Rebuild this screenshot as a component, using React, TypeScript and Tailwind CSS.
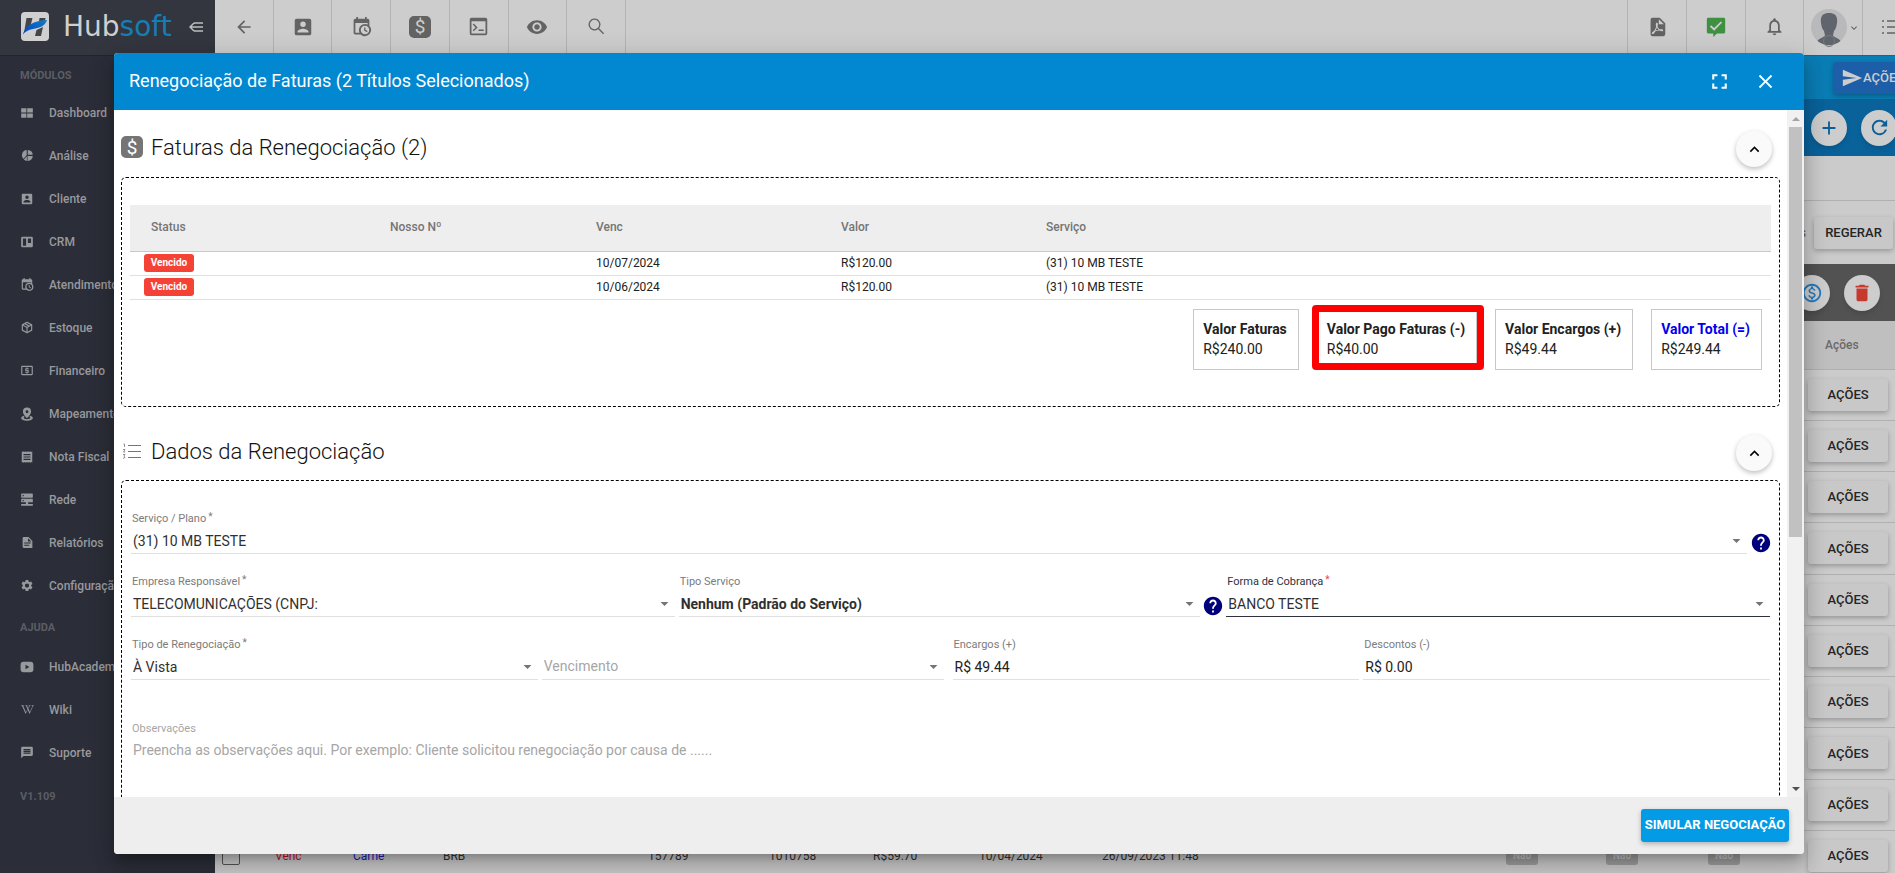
import React, { useId } from "react";
import {
  MdAdd,
  MdArrowBack,
  MdArrowDropDown,
  MdClose,
  MdDelete,
  MdFullscreen,
  MdHelp,
  MdKeyboardArrowDown,
  MdKeyboardArrowUp,
  MdLocalAtm,
  MdMessage,
  MdNotificationsNone,
  MdOutlineMonetizationOn,
  MdReceipt,
  MdRefresh,
  MdSend,
  MdSettings,
  MdVisibility,
} from "react-icons/md";
import { FaWikipediaW } from "react-icons/fa";

function Glyph({ d, size }: { d: string; size: number }) {
  return (
    <svg width={size} height={size} viewBox="0 0 24 24" fill="currentColor" fillRule="evenodd" aria-hidden="true">
      <path d={d} />
    </svg>
  );
}

const shapes = {
  accountBox:
    "M6,17C6,15 10,13.9 12,13.9C14,13.9 18,15 18,17V18H6M15,9A3,3 0 0,1 12,12A3,3 0 0,1 9,9A3,3 0 0,1 12,6A3,3 0 0,1 15,9M3,5V19A2,2 0 0,0 5,21H19A2,2 0 0,0 21,19V5A2,2 0 0,0 19,3H5C3.89,3 3,3.9 3,5Z",
  calendarClock:
    "M15,13H16.5V15.82L18.94,17.23L18.19,18.53L15,16.69V13M19,8H5V19H9.67C9.24,18.09 9,17.07 9,16A7,7 0 0,1 16,9C17.07,9 18.09,9.24 19,9.67V8M5,21C3.89,21 3,20.1 3,19V5C3,3.89 3.89,3 5,3H6V1H8V3H16V1H18V3H19A2,2 0 0,1 21,5V11.1C22.24,12.36 23,14.09 23,16A7,7 0 0,1 16,23C14.09,23 12.36,22.24 11.1,21H5M16,11.15A4.85,4.85 0 0,0 11.15,16C11.15,18.68 13.32,20.85 16,20.85A4.85,4.85 0 0,0 20.85,16C20.85,13.32 18.68,11.15 16,11.15Z",
  filePdf:
    "M14,9H19.5L14,3.5V9M7,2H15L21,8V20A2,2 0 0,1 19,22H7C5.89,22 5,21.1 5,20V4A2,2 0 0,1 7,2M11.93,12.44C12.34,13.34 12.86,14.08 13.46,14.59L13.87,14.91C13,15.07 11.8,15.35 10.53,15.84V15.84L10.42,15.88L10.92,14.84C11.37,13.97 11.7,13.18 11.93,12.44M18.41,16.25C18.59,16.07 18.68,15.84 18.69,15.59C18.72,15.39 18.67,15.2 18.57,15.04C18.28,14.57 17.53,14.35 16.29,14.35L15,14.42L14.13,13.84C13.5,13.32 12.93,12.41 12.53,11.28L12.57,11.14C12.9,9.81 13.21,8.2 12.55,7.54C12.39,7.38 12.17,7.3 11.94,7.3H11.7C11.33,7.3 11,7.69 10.91,8.07C10.54,9.4 10.76,10.13 11.13,11.34V11.35C10.88,12.23 10.56,13.25 10.05,14.28L9.09,16.08L8.2,16.57C7,17.32 6.43,18.16 6.32,18.69C6.28,18.88 6.3,19.05 6.37,19.23L6.4,19.28L6.88,19.59L7.32,19.7C8.13,19.7 9.05,18.75 10.29,16.63L10.47,16.56C11.5,16.23 12.78,16 14.5,15.81C15.53,16.32 16.74,16.55 17.5,16.55C17.94,16.55 18.24,16.44 18.41,16.25Z",
  consoleWindow: "M4,2H20A2,2 0 0,1 22,4V20A2,2 0 0,1 20,22H4A2,2 0 0,1 2,20V4A2,2 0 0,1 4,2M4,6V20H20V6ZM6.6,8.6L11,13L6.6,17.4L5.4,16.2L8.6,13L5.4,9.8ZM12,15.5H18V17.2H12Z",
  magnifier: "M9.5,2A7.5,7.5 0 0,1 15.4,14.1L21.6,20.6L20.4,21.8L14.1,15.4A7.5,7.5 0 1,1 9.5,2M9.5,3.6A5.9,5.9 0 1,0 9.5,15.4A5.9,5.9 0 1,0 9.5,3.6",
  messageCheck: "M3.5,2H20.5A1.5,1.5 0 0,1 22,3.5V17.5A1.5,1.5 0 0,1 20.5,19H13L9,23V19H3.5A1.5,1.5 0 0,1 2,17.5V3.5A1.5,1.5 0 0,1 3.5,2M6.6,10.2L5.3,11.6L10,16L18.7,7.2L17.3,5.9L10,13.2Z",
  tiles: "M2,4H11V11.3H2ZM12.3,4H22V11.3H12.3ZM2,12.7H11V20H2ZM12.3,12.7H22V20H12.3Z",
  pie: "M10.5,2V11.5L4,18.5A10,10 0 0,1 10.5,2M12.5,2A10,10 0 0,1 21.8,10.8H12.5ZM12,13H21.8A10,10 0 0,1 12.5,22L12,22ZM10.8,13.5V22A10,10 0 0,1 5.2,19.6Z",
  board: "M4,3H20A2,2 0 0,1 22,5V19A2,2 0 0,1 20,21H4A2,2 0 0,1 2,19V5A2,2 0 0,1 4,3M5,6V18.5H10.5V6ZM13.5,6V13.5H19V6Z",
  cube: "M21,16.5C21,16.88 20.79,17.21 20.47,17.38L12.57,21.82C12.41,21.94 12.21,22 12,22C11.79,22 11.59,21.94 11.43,21.82L3.53,17.38C3.21,17.21 3,16.88 3,16.5V7.5C3,7.12 3.21,6.79 3.53,6.62L11.43,2.18C11.59,2.06 11.79,2 12,2C12.21,2 12.41,2.06 12.57,2.18L20.47,6.62C20.79,6.79 21,7.12 21,7.5V16.5M12,4.15L10.11,5.22L16,8.61L17.96,7.5L12,4.15M6.04,7.5L12,10.85L13.96,9.75L8.08,6.35L6.04,7.5M5,15.91L11,19.29V12.58L5,9.21V15.91M19,15.91V9.21L13,12.58V19.29L19,15.91Z",
  pin: "M12,1A7,7 0 0,1 19,8C19,13 12,19 12,19C12,19 5,13 5,8A7,7 0 0,1 12,1M12,5.5A2.5,2.5 0 1,0 12,10.5A2.5,2.5 0 1,0 12,5.5M6,15L8,17C7,17.5 6,18 6,18.6C6,20 9,21 12,21C15,21 18,20 18,18.6C18,18 17,17.5 16,17L18,15C20,16 22,17 22,19C22,22 17,23.6 12,23.6C7,23.6 2,22 2,19C2,17 4,16 6,15Z",
  server: "M3,1H21A1,1 0 0,1 22,2V7A1,1 0 0,1 21,8H3A1,1 0 0,1 2,7V2A1,1 0 0,1 3,1M3,10H21A1,1 0 0,1 22,11V15A1,1 0 0,1 21,16H14V19H22V22H2V19H10V16H3A1,1 0 0,1 2,15V11A1,1 0 0,1 3,10M4.5,3.5V5.5H6.5V3.5ZM4.5,12V14H6.5V12Z",
  fileText: "M5,2H14L21,9V22H5A2,2 0 0,1 3,20V4A2,2 0 0,1 5,2M13,4V10H19ZM6,12V14H18V12ZM6,16V18H15V16Z",
  video: "M6,3H18A5,5 0 0,1 23,8V16A5,5 0 0,1 18,21H6A5,5 0 0,1 1,16V8A5,5 0 0,1 6,3M9.5,8V16L16,12Z",
};

const modules: { label: string; icon: React.ReactNode }[] = [
  { label: "Dashboard", icon: <Glyph d={shapes.tiles} size={14} /> },
  { label: "Análise", icon: <Glyph d={shapes.pie} size={13} /> },
  { label: "Cliente", icon: <Glyph d={shapes.accountBox} size={14} /> },
  { label: "CRM", icon: <Glyph d={shapes.board} size={14} /> },
  { label: "Atendimento", icon: <Glyph d={shapes.calendarClock} size={15} /> },
  { label: "Estoque", icon: <Glyph d={shapes.cube} size={15} /> },
  { label: "Financeiro", icon: <MdLocalAtm size={15} /> },
  { label: "Mapeamento", icon: <Glyph d={shapes.pin} size={14} /> },
  { label: "Nota Fiscal", icon: <MdReceipt size={14} /> },
  { label: "Rede", icon: <Glyph d={shapes.server} size={14} /> },
  { label: "Relatórios", icon: <Glyph d={shapes.fileText} size={13} /> },
  { label: "Configuração", icon: <MdSettings size={15} /> },
];

const help: { label: string; icon: React.ReactNode }[] = [
  { label: "HubAcademy", icon: <Glyph d={shapes.video} size={14} /> },
  { label: "Wiki", icon: <FaWikipediaW size={13} /> },
  { label: "Suporte", icon: <MdMessage size={15} /> },
];

function DollarTile({ className }: { className: string }) {
  return (
    <span className={`flex size-[22px] items-center justify-center rounded-[5px] text-[19px] leading-none ${className}`}>
      $
    </span>
  );
}

function Logo() {
  return (
    <div className="flex w-full items-center">
      <svg width="28" height="29" viewBox="0 0 28 29" aria-hidden="true">
        <defs>
          <linearGradient id="swoosh" x1="0" x2="1" y1="1" y2="0">
            <stop offset="0" stopColor="#0a3fc0" />
            <stop offset="1" stopColor="#0d7fc8" />
          </linearGradient>
        </defs>
        <rect width="28" height="29" rx="4" fill="#d0d0d0" />
        <path d="M5.500 6H11.500L9.500 14L6.500 16.500L3 21Z" fill="#454545" />
        <path d="M18.500 6H24.500L24 8.500L18 9.500ZM15.500 18L22 15L20 24H14Z" fill="#454545" />
        <path d="M1.800 22.500C4.500 14 11 9 26 8C24.500 14 18 16 12 17C7.500 17.700 4 19.500 1.800 22.500Z" fill="url(#swoosh)" />
      </svg>
      <span className="ml-[14px] font-['DejaVu_Sans'] text-[28px] leading-8 text-[#cfcfcf]">
        Hub<span className="text-[#177db4]">soft</span>
      </span>
      <button type="button" aria-label="Recolher menu" className="ml-auto text-[#bdbdbd]">
        <svg width="14" height="12" viewBox="0 0 14 12" fill="none" stroke="currentColor" strokeWidth="1.500" aria-hidden="true">
          <path d="M5 2H14M1 6H14M5 10H14M5 2L1 6L5 10" />
        </svg>
      </button>
    </div>
  );
}

function MenuItem({ label, icon }: { label: string; icon: React.ReactNode }) {
  return (
    <li>
      <a href="#" className="flex h-[43px] items-center text-[12px] font-medium text-[#98999d]">
        <span className="flex w-[14px] justify-center">{icon}</span>
        <span className="ml-[15px]">{label}</span>
      </a>
    </li>
  );
}

function Sidebar() {
  return (
    <aside className="w-[215px] shrink-0 bg-[#2b2d38]">
      <div className="flex h-14 items-center border-b border-[#22242c] bg-[#33363f] pb-[2px] pl-[21px] pr-3">
        <Logo />
      </div>
      <nav className="pl-5">
        <h2 className="flex h-[35px] items-center pt-[6px] text-[11px] font-bold text-[#5b5d65]">MÓDULOS</h2>
        <ul>
          {modules.map((m) => (
            <MenuItem key={m.label} {...m} />
          ))}
        </ul>
        <h2 className="flex h-[38px] items-center pt-1 text-[11px] font-bold text-[#5b5d65]">AJUDA</h2>
        <ul>
          {help.map((m) => (
            <MenuItem key={m.label} {...m} />
          ))}
        </ul>
        <p className="flex h-[43px] items-center pt-1 text-[11px] font-bold text-[#5b5d65]">V1.109</p>
      </nav>
    </aside>
  );
}

function TopBar() {
  const left = [
    { label: "Voltar", icon: <MdArrowBack size={20} /> },
    { label: "Clientes", icon: <Glyph d={shapes.accountBox} size={22} /> },
    { label: "Agenda", icon: <Glyph d={shapes.calendarClock} size={21} /> },
    { label: "Financeiro", icon: <DollarTile className="bg-[#636363] text-[#cdcdcd]" /> },
    { label: "Console", icon: <Glyph d={shapes.consoleWindow} size={21} /> },
    { label: "Visualizar", icon: <MdVisibility size={22} /> },
    { label: "Pesquisar", icon: <Glyph d={shapes.magnifier} size={19} /> },
  ];
  return (
    <header className="flex h-14 border-b border-[#0b6a9c] bg-[#cdcdcd] text-[#636363]">
      <div className="grid w-[411px] grid-cols-7">
        {left.map((b) => (
          <button key={b.label} type="button" aria-label={b.label} className="flex items-center justify-center border-r border-[#b3b3b3] pb-[2px]">
            {b.icon}
          </button>
        ))}
      </div>
      <div className="-mr-[26px] ml-auto grid w-[294px] grid-cols-5">
        <button type="button" aria-label="Relatórios em PDF" className="flex items-center justify-center border-l border-[#b3b3b3] pb-[2px]">
          <Glyph d={shapes.filePdf} size={22} />
        </button>
        <button type="button" aria-label="Mensagens" className="flex items-center justify-center border-l border-[#b3b3b3] pb-[2px] text-[#3d9140]">
          <Glyph d={shapes.messageCheck} size={22} />
        </button>
        <button type="button" aria-label="Notificações" className="flex items-center justify-center border-l border-[#b3b3b3] pb-[2px]">
          <MdNotificationsNone size={21} />
        </button>
        <button type="button" aria-label="Perfil" className="flex items-center justify-end gap-px border-l border-[#b3b3b3] pr-[2px]">
          <svg width="36" height="38" viewBox="0 0 36 38" aria-hidden="true">
            <circle cx="18" cy="18" r="18" fill="#b9b9bb" />
            <path d="M6.500 32C8 29 13 28.500 14 26.500L13 22C11 20 10.500 17 10 14C9 7 12 4 18 4C24 4 27 7 26 14C25.500 17 25 20 23 22L22 26.500C23 28.500 28 29 29.500 32A18 18 0 0 1 6.500 32Z" fill="#60656d" />
            <circle cx="18" cy="32" r="5.500" fill="none" stroke="#777" />
          </svg>
          <MdKeyboardArrowDown size={12} />
        </button>
        <button type="button" aria-label="Atalhos" className="flex items-center justify-center border-l border-[#b3b3b3] pb-[2px]">
          <svg width="20" height="14" viewBox="0 0 20 14" stroke="currentColor" strokeWidth="1.500" aria-hidden="true">
            <path d="M0 1H2M5 1H20M0 7H2M5 7H20M0 13H2M5 13H20" />
          </svg>
        </button>
      </div>
    </header>
  );
}

function RoundButton({ label, className, children }: { label: string; className: string; children: React.ReactNode }) {
  return (
    <button type="button" aria-label={label} className={`flex size-9 shrink-0 items-center justify-center rounded-full ${className}`}>
      {children}
    </button>
  );
}

const raised = "rounded-[3px] bg-[#c8c8c8] text-[13px] font-medium text-[#252525] shadow-[0_2px_5px_rgba(0,0,0,0.26)]";

function InvoicePage() {
  const blank = Array.from({ length: 9 }, (_, i) => i);
  const cell = "text-left";
  return (
    <main className="flex-1 overflow-hidden">
      <div className="flex h-[43px] items-center justify-end bg-[#0a7db5]">
        <button
          type="button"
          className="-mr-[26px] flex h-8 w-[88px] items-center rounded-[3px] bg-[#1c5fa8] pl-[8px] text-[13px] font-medium text-[#cdcdcd] shadow-[0_2px_5px_rgba(0,0,0,0.26)]"
        >
          <MdSend size={22} />
          AÇÕES
        </button>
      </div>
      <div className="flex h-[57px] items-center justify-end gap-[14px] bg-[#0a629b] text-[#0b5e96]">
        <RoundButton label="Adicionar" className="bg-[#cdcdcd] shadow-md">
          <MdAdd size={22} />
        </RoundButton>
        <RoundButton label="Atualizar" className="-mr-[2px] bg-[#cdcdcd] shadow-md">
          <MdRefresh size={23} />
        </RoundButton>
      </div>
      <div className="h-[45px] border-b border-[#b0b0b0] bg-[#cbcbcb]" />
      <div className="flex h-[63px] items-center justify-end gap-2 bg-[#cbcbcb] text-[12px] text-[#555]">
        <span>Boletos</span>
        <button type="button" className={`mr-[2px] h-8 w-[79px] ${raised}`}>
          REGERAR
        </button>
      </div>
      <div className="flex h-[57px] items-center justify-end gap-[14px] bg-[#525252] pr-[15px]">
        <RoundButton label="Receber" className="bg-[#cdcdcd] text-[#2478bd] shadow-md">
          <MdOutlineMonetizationOn size={22} />
        </RoundButton>
        <RoundButton label="Excluir" className="bg-[#cdcdcd] text-[#c6392f] shadow-md">
          <MdDelete size={22} />
        </RoundButton>
      </div>
      <table className="h-[561px] w-full table-fixed bg-[#cbcbcb] text-[12px] text-[#333]">
        <colgroup>
          <col className="w-[60px]" />
          <col className="w-[78px]" />
          <col className="w-[90px]" />
          <col className="w-[205px]" />
          <col className="w-[121px]" />
          <col className="w-[104px]" />
          <col className="w-[106px]" />
          <col className="w-[123px]" />
          <col />
          <col className="w-[100px]" />
          <col className="w-[102px]" />
          <col className="w-[91px]" />
          <col className="w-[96px]" />
        </colgroup>
        <thead>
          <tr className="h-[48px] border-b border-[#b0b0b0] bg-[#bfbfbf]">
            <td colSpan={12} />
            <th className="pl-[26px] text-left font-medium text-[#6a6a6a]">Ações</th>
          </tr>
        </thead>
        <tbody>
          {blank.map((i) => (
            <tr key={i} className="border-b border-[#b0b0b0]">
              <td colSpan={12} />
              <td className="pl-[9px]">
                <button type="button" className={`block h-8 w-20 ${raised}`}>
                  AÇÕES
                </button>
              </td>
            </tr>
          ))}
          <tr className="border-b border-[#b0b0b0]">
            <td className="pl-[7px]">
              <input type="checkbox" aria-label="Selecionar fatura" className="block size-[18px] appearance-none rounded-[2px] border border-[#555]" />
            </td>
            <td className={`${cell} text-[#c4161c]`}>Venc</td>
            <td className={`${cell} text-[#1c1cc0]`}>Carne</td>
            <td className={cell}>BRB</td>
            <td className={cell}>157789</td>
            <td className={cell}>1010758</td>
            <td className={cell}>R$59.70</td>
            <td className={cell}>10/04/2024</td>
            <td className={cell}>26/09/2023 11:48</td>
            {["a", "b", "c"].map((k) => (
              <td key={k}>
                <span className="block w-8 rounded-[3px] bg-[#9f9f9f] text-center text-[10px] font-bold leading-[18px] text-[#c6c6c6]">Não</span>
              </td>
            ))}
            <td className="pl-[9px]">
              <button type="button" className={`block h-8 w-20 ${raised}`}>
                AÇÕES
              </button>
            </td>
          </tr>
        </tbody>
      </table>
    </main>
  );
}

function SectionHeading({ icon, children }: { icon: React.ReactNode; children: React.ReactNode }) {
  return (
    <div className="flex h-[62px] items-center pr-2">
      <span className="flex w-[22px] justify-center">{icon}</span>
      <h3 className="ml-2 flex-1 pt-[2px] text-[22px] font-light leading-7 text-[#111111]">{children}</h3>
      <RoundButton label="Recolher seção" className="mt-1 bg-[#fafafa] text-black shadow-[0_2px_5px_rgba(0,0,0,0.26)]">
        <MdKeyboardArrowUp size={19} />
      </RoundButton>
    </div>
  );
}

function Label({ htmlFor, text, required, tone }: { htmlFor: string; text: string; required?: boolean; tone?: "active" | "faint" }) {
  const color = tone === "active" ? "text-[#2d323e]" : tone === "faint" ? "text-[#a6a6a6]" : "text-[#7b7b7b]";
  return (
    <label htmlFor={htmlFor} className={`block h-[18px] pl-px pt-px text-[11px] leading-4 ${color}`}>
      {text}
      {required && <span className={`ml-[2px] align-[2px] text-[10px] leading-none ${tone === "active" ? "text-[#f44336]" : ""}`}>*</span>}
    </label>
  );
}

function SelectField({
  label,
  value,
  required,
  active,
  bold,
  placeholder,
}: {
  label: string;
  value: string;
  required?: boolean;
  active?: boolean;
  bold?: boolean;
  placeholder?: boolean;
}) {
  const id = useId();
  return (
    <div className="min-w-0 flex-1">
      {placeholder ? <div className="h-[18px]" /> : <Label htmlFor={id} text={label} required={required} tone={active ? "active" : undefined} />}
      <div className="relative">
        <select
          id={id}
          aria-label={placeholder ? label : undefined}
          className={`block h-[26px] w-full appearance-none border-b bg-transparent pl-[2px] text-[14px] outline-none ${
            active ? "border-[#2d323e]" : "border-[#e0e0e0]"
          } ${bold ? "font-bold" : ""} ${placeholder ? "text-[#a6a6a6]" : "pt-[2px] text-[#303030]"}`}
        >
          <option>{value}</option>
        </select>
        <MdArrowDropDown size={19} className="pointer-events-none absolute right-px top-[3px] text-[#757575]" />
      </div>
    </div>
  );
}

function TextField({ label, value }: { label: string; value: string }) {
  const id = useId();
  return (
    <div className="min-w-0 flex-1">
      <Label htmlFor={id} text={label} />
      <input id={id} defaultValue={value} className="block h-[26px] w-full border-b border-[#e0e0e0] pl-[2px] text-[14px] text-[#212121] outline-none" />
    </div>
  );
}

function Help() {
  return <MdHelp size={22} className="-mx-[2px] shrink-0 self-end text-[#00007b]" />;
}

function TotalBox({ title, value, accent, marked }: { title: string; value: string; accent?: boolean; marked?: boolean }) {
  return (
    <div className="relative h-[61px] border border-[#c8c8c8] px-[9px] pt-[9px] text-[14px] leading-5 text-[#212121]">
      <p className={`pr-[2px] font-bold ${accent ? "text-[#0000f0]" : ""}`}>{title}</p>
      <p>{value}</p>
      {marked && <span className="absolute -bottom-px -left-[6px] -right-[8px] -top-[5px] rounded-[4px] border-[7px] border-[#ff0000]" />}
    </div>
  );
}

function RenegotiationDialog() {
  const obsId = useId();
  const rows = [
    { due: "10/07/2024", value: "R$120.00", service: "(31) 10 MB TESTE" },
    { due: "10/06/2024", value: "R$120.00", service: "(31) 10 MB TESTE" },
  ];
  return (
    <section
      role="dialog"
      aria-labelledby="dialog-title"
      className="flex h-full flex-col overflow-hidden rounded-[4px] bg-white shadow-[0_7px_8px_-4px_rgba(0,0,0,0.2),0_13px_19px_2px_rgba(0,0,0,0.14),0_5px_24px_4px_rgba(0,0,0,0.12)]"
    >
      <header className="flex h-[57px] shrink-0 items-center bg-[#0288d1] pl-[15px] pr-[27px] text-white">
        <h2 id="dialog-title" className="flex-1 pb-[2px] text-[18px] font-normal">
          Renegociação de Faturas (2 Títulos Selecionados)
        </h2>
        <button type="button" aria-label="Tela cheia">
          <MdFullscreen size={25} />
        </button>
        <button type="button" aria-label="Fechar" className="ml-[22px]">
          <MdClose size={23} />
        </button>
      </header>

      <div className="flex min-h-0 flex-1">
        <div className="min-w-0 flex-1 overflow-y-auto pl-[7px] pr-[7px] pt-[6px] [scrollbar-width:none]">
          <SectionHeading icon={<DollarTile className="bg-[#757575] text-white" />}>Faturas da Renegociação (2)</SectionHeading>
          <div className="-mt-px h-[230px] rounded-[5px] border border-dashed border-black px-2 pt-[27px]">
            <table className="w-full table-fixed text-left text-[12px] text-[#212121]">
              <colgroup>
                <col className="w-[239px]" />
                <col className="w-[206px]" />
                <col className="w-[245px]" />
                <col className="w-[205px]" />
                <col />
              </colgroup>
              <thead>
                <tr className="h-[46px] border-b border-[#c8c8c8] bg-[#eeeeee] text-[#757575]">
                  {["Status", "Nosso Nº", "Venc", "Valor", "Serviço"].map((h) => (
                    <th key={h} className="pb-px pl-[21px] font-medium">
                      {h}
                    </th>
                  ))}
                </tr>
              </thead>
              <tbody>
                {rows.map((r) => (
                  <tr key={r.due} className="h-[24px] border-b border-[#e0e0e0]">
                    <td className="pl-[14px]">
                      <span className="block w-[50px] rounded-[3px] bg-[#f44336] text-center text-[10px] font-bold leading-[18px] text-white">Vencido</span>
                    </td>
                    <td />
                    <td className="pl-[21px]">{r.due}</td>
                    <td className="pl-[21px]">{r.value}</td>
                    <td className="pl-[21px]">{r.service}</td>
                  </tr>
                ))}
              </tbody>
            </table>
            <div className="flex justify-end gap-[18px] pr-[9px] pt-[9px]">
              <TotalBox title="Valor Faturas" value="R$240.00" />
              <TotalBox title="Valor Pago Faturas (-)" value="R$40.00" marked />
              <TotalBox title="Valor Encargos (+)" value="R$49.44" />
              <TotalBox title="Valor Total (=)" value="R$249.44" accent />
            </div>
          </div>

          <div className="mt-[13px]">
            <SectionHeading
              icon={
                <svg width="18" height="16" viewBox="0 0 18 16" fill="none" stroke="#757575" aria-hidden="true">
                  <path d="M5 2.500H18M5 8.500H18M5 14.500H18" strokeWidth="1.200" />
                  <path d="M0.500 1H1.500V4M0 6.500H2L0.500 9H2.200M0 11.500H2L1 13L2 14.500L0 15.500" strokeWidth="0.800" />
                </svg>
              }
            >
              Dados da Renegociação
            </SectionHeading>
          </div>
          <form className="-mt-[2px] flex h-[420px] flex-col gap-[19px] rounded-[5px] border border-dashed border-black px-[9px] pt-[29px]">
            <div className="flex gap-[5px]">
              <SelectField label="Serviço / Plano" value="(31) 10 MB TESTE" required />
              <Help />
            </div>
            <div className="grid grid-cols-3 gap-1">
              <SelectField label="Empresa Responsável" value="TELECOMUNICAÇÕES (CNPJ:" required />
              <div className="flex gap-1">
                <SelectField label="Tipo Serviço" value="Nenhum (Padrão do Serviço)" bold />
                <Help />
              </div>
              <SelectField label="Forma de Cobrança" value="BANCO TESTE" required active />
            </div>
            <div className="grid grid-cols-4 gap-1">
              <SelectField label="Tipo de Renegociação" value="À Vista" required />
              <div className="flex pr-[5px]">
                <SelectField label="Vencimento" value="Vencimento" placeholder />
              </div>
              <TextField label="Encargos (+)" value="R$ 49.44" />
              <TextField label="Descontos (-)" value="R$ 0.00" />
            </div>
            <div className="mt-[21px]">
              <Label htmlFor={obsId} text="Observações" tone="faint" />
              <textarea
                id={obsId}
                placeholder="Preencha as observações aqui. Por exemplo: Cliente solicitou renegociação por causa de ......"
                className="block h-[80px] w-full resize-none border-b border-[#e0e0e0] pl-[2px] pt-[2px] text-[14px] leading-5 outline-none placeholder:text-[#a6a6a6]"
              />
            </div>
          </form>
        </div>
        <div className="flex w-[17px] flex-col items-center bg-[#f1f1f1]" aria-hidden="true">
          <span className="flex h-[17px] items-center text-[#a3a3a3]">
            <svg width="8" height="4" viewBox="0 0 8 4" fill="currentColor">
              <path d="M0 4L4 0L8 4Z" />
            </svg>
          </span>
          <span className="h-[410px] w-[13px] bg-[#c1c1c1]" />
          <span className="mt-auto flex h-[17px] items-center text-[#505050]">
            <svg width="8" height="4" viewBox="0 0 8 4" fill="currentColor">
              <path d="M0 0L4 4L8 0Z" />
            </svg>
          </span>
        </div>
      </div>

      <footer className="flex h-[57px] shrink-0 items-center justify-end bg-[#eeeeee] pr-[15px]">
        <button type="button" className="h-[33px] w-[148px] rounded-[3px] bg-[#039be5] pb-px text-[13px] font-bold text-white shadow-[0_2px_5px_rgba(0,0,0,0.26)]">
          SIMULAR NEGOCIAÇÃO
        </button>
      </footer>
    </section>
  );
}

export default function App() {
  return (
    <div className="relative flex h-screen overflow-hidden bg-[#cbcbcb] font-[Roboto,sans-serif]">
      <Sidebar />
      <div className="flex min-w-0 flex-1 flex-col">
        <TopBar />
        <InvoicePage />
      </div>
      <div className="absolute inset-0 pb-[19px] pl-[114px] pr-[91px] pt-[53px]">
        <RenegotiationDialog />
      </div>
    </div>
  );
}
